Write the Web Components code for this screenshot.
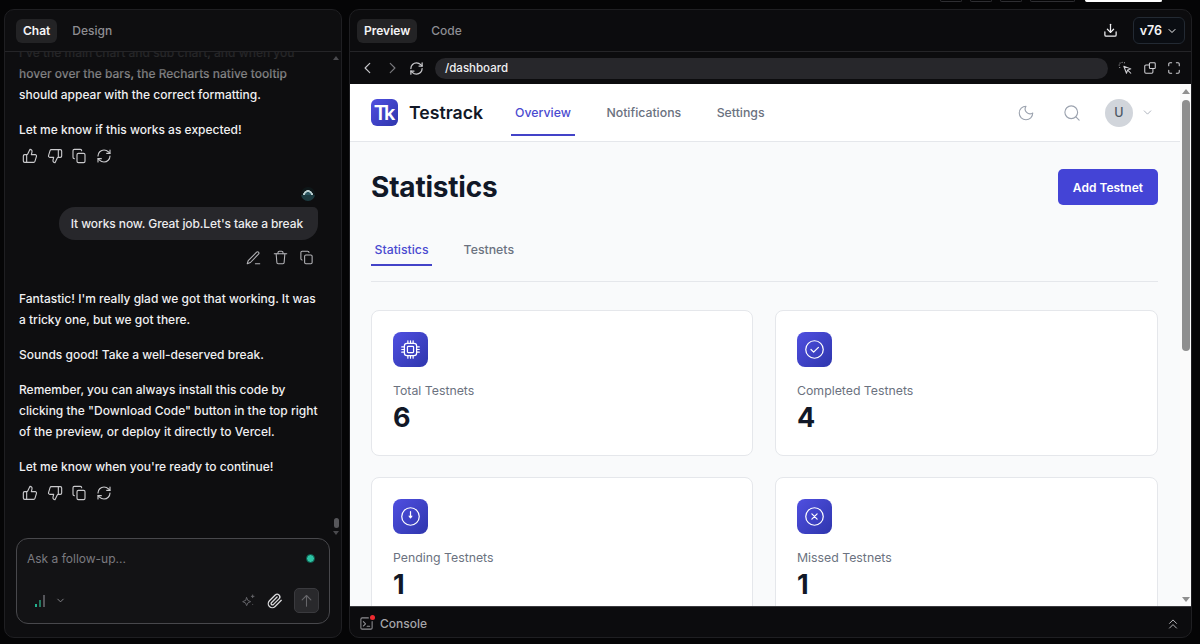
<!doctype html>
<html lang="en">
<head>
<meta charset="utf-8">
<title>Testrack</title>
<style>
  html, body { margin: 0; height: 100%; background: #050506; overflow: hidden; }
  body { font-family: Inter, "Noto Sans", sans-serif; }
</style>
</head>
<body>
<app-shell>
  <chat-panel slot="chat">
    <chat-text faded>I've the main chart and sub chart, and when you</chat-text>
    <chat-text>hover over the bars, the Recharts native tooltip<br>should appear with the correct formatting.</chat-text>
    <chat-text>Let me know if this works as expected!</chat-text>
    <reply-actions></reply-actions>
    <user-bubble>It works now. Great job.Let's take a break</user-bubble>
    <chat-text>Fantastic! I'm really glad we got that working. It was<br>a tricky one, but we got there.</chat-text>
    <chat-text>Sounds good! Take a well-deserved break.</chat-text>
    <chat-text>Remember, you can always install this code by<br>clicking the "Download Code" button in the top right<br>of the preview, or deploy it directly to Vercel.</chat-text>
    <chat-text>Let me know when you're ready to continue!</chat-text>
    <reply-actions></reply-actions>
  </chat-panel>
  <preview-panel slot="preview">
    <testrack-app>
      <stat-card label="Total Testnets" value="6" icon="cpu"></stat-card>
      <stat-card label="Completed Testnets" value="4" icon="check"></stat-card>
      <stat-card label="Pending Testnets" value="1" icon="clock"></stat-card>
      <stat-card label="Missed Testnets" value="1" icon="cross"></stat-card>
    </testrack-app>
  </preview-panel>
</app-shell>

<script>
const ICONS = {
  up: `<path d="M7 10v11"/><path d="M15 5.900 14 10h5.800a2 2 0 0 1 1.900 2.600l-2.300 7.500a2 2 0 0 1-1.900 1.400H4a2 2 0 0 1-2-2v-7.500a2 2 0 0 1 2-2h2.800a2 2 0 0 0 1.800-1.100L12 2a3.100 3.100 0 0 1 3 3.900Z"/>`,
  down: `<path d="M17 14V3"/><path d="M9 18.100 10 14H4.200a2 2 0 0 1-1.900-2.600l2.300-7.500A2 2 0 0 1 6.500 2.500H20a2 2 0 0 1 2 2V12a2 2 0 0 1-2 2h-2.800a2 2 0 0 0-1.800 1.100L12 22a3.100 3.100 0 0 1-3-3.900Z"/>`,
  copy: `<rect x="9" y="8" width="12" height="14" rx="2"/><path d="M5 16a2 2 0 0 1-2-2V4a2 2 0 0 1 2-2h9a2 2 0 0 1 2 2"/>`,
  refresh: `<path d="M3 12a9 9 0 0 1 9-9 9.750 9.750 0 0 1 6.740 2.740L21 8"/><path d="M21 3v5h-5"/><path d="M21 12a9 9 0 0 1-9 9 9.750 9.750 0 0 1-6.740-2.740L3 16"/><path d="M8 16H3v5"/>`,
  pen: `<path d="M15 22h7"/><path d="M17 3.500a2.100 2.100 0 0 1 3 3L7 20l-5 2 1.500-5Z"/>`,
  trash: `<path d="M2 6h20"/><path d="M5 6l1.200 14a2 2 0 0 0 2 2h7.600a2 2 0 0 0 2-2L19 6"/><path d="M8 6V4a2 2 0 0 1 2-2h4a2 2 0 0 1 2 2v2"/>`,
  download: `<path d="M21 14v5a2 2 0 0 1-2 2H5a2 2 0 0 1-2-2v-5"/><path d="M7 10l5 5 5-5"/><path d="M12 15V2"/>`,
  chevron: `<path d="m6 9 6 6 6-6"/>`,
  left: `<path d="m15 4-8 8 8 8"/>`,
  right: `<path d="m9 4 8 8-8 8"/>`,
  pointer: `<path d="m10 9 12 4.500-5.500 2L14.500 21Z"/><path d="m17 16 5 5"/><path d="M7 2v.01M2 7h.01M3.500 3.500v.01M11 3v.01M3 11v.01"/>`,
  windows: `<path d="M11 7H5a2 2 0 0 0-2 2v10a2 2 0 0 0 2 2h10a2 2 0 0 0 2-2v-6"/><rect x="11" y="3" width="10" height="10" rx="1.500"/>`,
  full: `<path d="M3 8V5a2 2 0 0 1 2-2h3"/><path d="M16 3h3a2 2 0 0 1 2 2v3"/><path d="M21 16v3a2 2 0 0 1-2 2h-3"/><path d="M8 21H5a2 2 0 0 1-2-2v-3"/>`,
  moon: `<path d="M12 3a6.500 6.500 0 0 0 9 9 9 9 0 1 1-9-9Z"/>`,
  search: `<circle cx="11" cy="11" r="8.500"/><path d="m21.500 21.500-4.300-4.300"/>`,
  cpu: `<rect x="5" y="5" width="14" height="14" rx="3"/><rect x="8.500" y="8.500" width="7" height="7" rx="1"/><path d="M9 2v3M12 2v3M15 2v3M9 19v3M12 19v3M15 19v3M2 9h3M2 12h3M2 15h3M19 9h3M19 12h3M19 15h3"/>`,
  check: `<circle cx="12" cy="12" r="10"/><path d="m8 12 3 3 5.500-5.500"/>`,
  clock: `<circle cx="12" cy="12" r="10"/><path d="M12 6.500v6.500"/><path d="m10.500 11.500 1.500 2 1.500-2"/>`,
  cross: `<circle cx="12" cy="12" r="10"/><path d="m9 9 6 6M15 9l-6 6"/>`,
  sparkle: `<path d="M10 7l1.800 4.200L16 13l-4.200 1.800L10 19l-1.800-4.200L4 13l4.200-1.800Z"/><path d="M19 3v4M17 5h4M19 17v.01"/>`,
  clip: `<path d="m21.400 11-9.200 9.200a6 6 0 0 1-8.500-8.500l8.600-8.600A4 4 0 1 1 18 8.800l-8.600 8.600a2 2 0 0 1-2.800-2.800l8.500-8.500"/>`,
  arrow: `<path d="M12 21V4"/><path d="m5 11 7-7 7 7"/>`,
  terminal: `<path d="M21 9v10a2 2 0 0 1-2 2H5a2 2 0 0 1-2-2V5a2 2 0 0 1 2-2h10"/><path d="m7 9 3.500 3.500L7 16"/><path d="M13 16.500h4"/>`,
  chevrons: `<path d="m18 11-6-6-6 6"/><path d="m18 19-6-6-6 6"/>`
};

function define(tag, css, html) {
  customElements.define(tag, class extends HTMLElement {
    connectedCallback() {
      if (this.shadowRoot) return;
      this.attachShadow({ mode: "open" }).innerHTML =
        `<style>${css}</style>${typeof html === "function" ? html(this) : html}`;
    }
  });
}

define("ui-icon", `
  :host { display: inline-flex; flex: none; width: var(--size, 16px); height: var(--size, 16px); color: inherit; }
  svg { width: 100%; height: 100%; fill: none; stroke: currentColor; stroke-width: var(--stroke, 2); stroke-linecap: round; stroke-linejoin: round; }
`, el => `<svg viewBox="0 0 24 24">${ICONS[el.getAttribute("name")] || ""}</svg>`);

define("tab-button", `
  :host { display: flex; align-items: center; height: 24px; padding: 0 7px; border-radius: 6px; font-size: 12px; font-weight: 500; color: #8d8d92; }
  :host([active]) { background: #232325; color: #f4f4f5; font-weight: 600; }
`, `<slot></slot>`);

define("chat-text", `
  :host { display: block; font-size: 12px; line-height: 21px; font-weight: 500; color: #f0f0f2; margin-bottom: 14px; white-space: nowrap; }
  :host([faded]) { margin-bottom: 0; }
`, `<slot></slot>`);

define("reply-actions", `
  :host { display: flex; gap: 8.500px; padding: 0 0 0 3px; color: #c9c9cc; --size: 16px; --stroke: 1.700; height: 16px; margin-top: -6px; margin-bottom: 23px; }
  :host(:last-child) { margin-bottom: 37px; }
`, `<ui-icon name="up"></ui-icon><ui-icon name="down"></ui-icon><ui-icon name="copy"></ui-icon><ui-icon name="refresh"></ui-icon>`);

define("user-bubble", `
  :host { display: flex; flex-direction: column; align-items: flex-end; margin: 0 5px 23px 0; }
  .avatar { width: 14px; height: 14px; border-radius: 50%; background: linear-gradient(transparent 58%, #1c3a40 58%), radial-gradient(circle at 50% 58%, #2a5560 0 26%, #b8ced0 30% 44%, #0e1719 48%); margin: 0 3px 6px 0; box-sizing: border-box; }
  .bubble { height: 33px; display: flex; align-items: center; padding: 0 15px 0 12px; background: #27272b; border-radius: 16px 5px 16px 16px; font-size: 12px; letter-spacing: -.1px; font-weight: 500; color: #ececee; white-space: nowrap; }
  .tools { display: flex; gap: 11.500px; color: #b4b4b8; --size: 15px; --stroke: 1.700; margin: 10px 4px 0 0; }
`, `<div class="avatar"></div><div class="bubble"><slot></slot></div>
  <div class="tools"><ui-icon name="pen"></ui-icon><ui-icon name="trash"></ui-icon><ui-icon name="copy"></ui-icon></div>`);

define("mini-scrollbar", `
  :host { display: flex; flex-direction: column; align-items: center; flex: none; width: 10px; padding: 4px 0 3px; box-sizing: border-box; }
  .up { border: 3px solid transparent; border-top: 0; border-bottom: 4px solid #4a4a4e; }
  .down { border: 3px solid transparent; border-bottom: 0; border-top: 4px solid #4a4a4e; margin-top: 3px; }
  .gap { flex: 1; }
  .thumb { width: 5px; height: 10px; border-radius: 3px; background: #56565a; }
`, `<div class="up"></div><div class="gap"></div><div class="thumb"></div><div class="down"></div>`);

define("chat-input", `
  :host { display: flex; flex-direction: column; justify-content: space-between; height: 86px; box-sizing: border-box; margin: 0 11px 13px; padding: 10px 10px 10px; border: 1px solid #48484c; border-radius: 12px; background: #131315; }
  .top, .bottom { display: flex; align-items: center; }
  .top { justify-content: space-between; font-size: 12px; color: #7b7b80; height: 18px; padding-right: 4px; }
  .dot { width: 7px; height: 7px; border-radius: 50%; background: #2dc3a4; border: 1px solid #0d5145; }
  .bottom { gap: 9px; }
  .model { display: flex; align-items: center; gap: 10px; margin-left: 8px; flex: 1; color: #8a8a8e; --size: 11px; }
  .bars { display: flex; align-items: flex-end; gap: 2px; height: 12px; }
  .bars i { width: 2px; background: #55555a; }
  .bars i:nth-child(1) { height: 3px; background: #23b28f; }
  .bars i:nth-child(2) { height: 7px; background: #23795f; }
  .bars i:nth-child(3) { height: 12px; }
  .spark { color: #636368; --size: 16px; --stroke: 1.500; }
  .clip { color: #d8d8da; --size: 16px; margin: 0 2px 0 2px; }
  .send { display: flex; align-items: center; justify-content: center; width: 25px; height: 25px; border-radius: 5px; background: #29292c; border: 1px solid #3a3a3e; box-sizing: border-box; color: #66666a; --size: 15px; --stroke: 1.700; }
`, `<div class="top"><span>Ask a follow-up...</span><span class="dot"></span></div>
  <div class="bottom">
    <div class="model"><span class="bars"><i></i><i></i><i></i></span><ui-icon name="chevron"></ui-icon></div>
    <ui-icon class="spark" name="sparkle"></ui-icon>
    <ui-icon class="clip" name="clip"></ui-icon>
    <div class="send"><ui-icon name="arrow"></ui-icon></div>
  </div>`);

define("chat-panel", `
  :host { display: flex; flex-direction: column; width: 338px; flex: none; box-sizing: border-box; background: #0e0e10; border: 1px solid #1f1f22; border-radius: 10px; overflow: hidden; }
  header { display: flex; align-items: center; height: 42px; flex: none; padding: 0 11px; border-bottom: 1px solid #252528; box-sizing: border-box; }
  tab-button + tab-button { margin-left: 8px; }
  .body { flex: 1; min-height: 0; display: flex; position: relative; }
  .messages { flex: 1; min-width: 0; overflow: hidden; display: flex; flex-direction: column; justify-content: flex-end; padding: 0 8px 0 14px; }
  .fade { position: absolute; left: 0; right: 10px; top: 0; height: 36px; background: linear-gradient(rgba(14,14,16,.9) 10%, rgba(14,14,16,.45) 70%, rgba(14,14,16,0)); }
`, `<header><tab-button active>Chat</tab-button><tab-button>Design</tab-button></header>
  <div class="body"><div class="messages"><slot></slot></div><mini-scrollbar></mini-scrollbar><div class="fade"></div></div>
  <chat-input></chat-input>`);

define("preview-panel", `
  :host { display: flex; flex-direction: column; flex: 1; min-width: 0; box-sizing: border-box; background: #0c0c0e; border: 1px solid #1f1f22; border-radius: 10px; overflow: hidden; }
  header { display: flex; align-items: center; height: 42px; flex: none; padding: 0 6px 0 7px; border-bottom: 1px solid #252528; box-sizing: border-box; }
  tab-button + tab-button { margin-left: 7px; }
  .grow { flex: 1; }
  .dl { color: #f0f0f2; --size: 15px; --stroke: 2; margin-right: 15px; }
  .version { display: flex; align-items: center; gap: 4px; height: 25px; padding: 0 6px; border: 1px solid #232a33; border-radius: 6px; background: #0a0d12; color: #f4f4f5; font-size: 12.500px; font-weight: 600; --size: 12px; }
  nav { display: flex; align-items: center; height: 32px; flex: none; padding: 0 10px 0 11px; color: #c4c4c8; --size: 14px; --stroke: 2; }
  nav .back { margin-right: 10px; }
  nav .fwd { color: #77777b; margin-right: 10px; }
  nav .reload { --size: 15px; margin-right: 11px; color: #c8c8cb; }
  .address { flex: 1; height: 21px; display: flex; align-items: center; padding: 0 10px; background: #27272b; border-radius: 11px; color: #f0f0f2; font-size: 11.500px; font-weight: 500; margin-right: 10px; }
  .tools { display: flex; gap: 10.500px; color: #d0d0d4; --stroke: 1.800; }
  main { flex: 1; min-height: 0; display: flex; background: #fff; }
  footer { display: flex; align-items: center; height: 31px; flex: none; padding: 3px 11px 0 9px; border-top: 1px solid #3a3a3e; box-sizing: border-box; color: #a5a5a9; font-size: 12px; font-weight: 500; gap: 6px; --stroke: 1.700; }
  .term { position: relative; display: inline-flex; color: #8e8e92; --size: 15px; }
  .term b { position: absolute; right: -1px; top: -1px; width: 5px; height: 5px; border-radius: 50%; background: #ee2b30; }
  .up2 { color: #b5b5b9; --size: 14px; }
`, `<header>
    <tab-button active>Preview</tab-button><tab-button>Code</tab-button>
    <span class="grow"></span>
    <ui-icon class="dl" name="download"></ui-icon>
    <div class="version">v76<ui-icon name="chevron"></ui-icon></div>
  </header>
  <nav>
    <ui-icon class="back" name="left"></ui-icon>
    <ui-icon class="fwd" name="right"></ui-icon>
    <ui-icon class="reload" name="refresh"></ui-icon>
    <div class="address">/dashboard</div>
    <div class="tools"><ui-icon name="pointer"></ui-icon><ui-icon name="windows"></ui-icon><ui-icon name="full"></ui-icon></div>
  </nav>
  <main><slot></slot></main>
  <footer><span class="term"><ui-icon name="terminal"></ui-icon><b></b></span>Console<span class="grow"></span><ui-icon class="up2" name="chevrons"></ui-icon></footer>`);

define("app-scrollbar", `
  :host { display: flex; flex-direction: column; align-items: center; flex: none; width: 11px; padding: 5px 0 4px; box-sizing: border-box; background: #fafafa; }
  .up { border: 4px solid transparent; border-top: 0; border-bottom: 5px solid #8f8f8f; }
  .down { border: 4px solid transparent; border-bottom: 0; border-top: 5px solid #8f8f8f; }
  .thumb { width: 8px; height: 251px; margin-top: 6px; border-radius: 4px; background: #8f8f8f; }
  .gap { flex: 1; }
`, `<div class="up"></div><div class="thumb"></div><div class="gap"></div><div class="down"></div>`);

define("stat-card", `
  :host { display: block; box-sizing: border-box; height: 146px; padding: 21px 21px 0; background: #fff; border: 1px solid #e5e7eb; border-radius: 8px; }
  .badge { display: flex; align-items: center; justify-content: center; width: 35px; height: 35px; border-radius: 8px; background: linear-gradient(135deg, #4f4fe0, #2f36ad); color: #fff; --size: 21px; --stroke: 1.400; }
  .label { margin-top: 16px; font-size: 12.300px; line-height: 16px; color: #6b7280; }
  .value { margin-top: 3px; font-size: 27px; line-height: 32px; font-weight: 700; color: #111827; }
`, el => `<div class="badge"><ui-icon name="${el.getAttribute("icon")}"></ui-icon></div>
  <div class="label">${el.getAttribute("label")}</div>
  <div class="value">${el.getAttribute("value")}</div>`);

define("testrack-app", `
  :host { display: flex; flex: 1; min-width: 0; color: #111827; }
  .scroll { flex: 1; min-width: 0; display: flex; flex-direction: column; overflow: hidden; background: #f9fafb; }
  header { display: flex; align-items: stretch; height: 58px; flex: none; box-sizing: border-box; padding: 0 26px 0 21px; background: #fff; border-bottom: 1px solid #e5e7eb; }
  .brand { display: flex; align-items: center; gap: 11px; font-size: 17.700px; font-weight: 600; margin-right: 28px; }
  .logo { display: flex; align-items: center; justify-content: center; width: 27px; height: 27px; border-radius: 6px; background: linear-gradient(135deg, #4f4fe0, #2f36ad); color: #fff; font-size: 20px; font-weight: 600; letter-spacing: -3px; padding-right: 3px; box-sizing: border-box; }
  .links { display: flex; align-items: flex-start; gap: 27.500px; flex: 1; }
  .links a { display: flex; align-items: center; height: 52px; padding: 6px 4px 0; font-size: 12.300px; font-weight: 500; color: #6b7280; border-bottom: 2px solid transparent; box-sizing: border-box; }
  .links a.on { color: #4a4ad0; border-bottom-color: #4343c8; }
  .end { display: flex; align-items: center; color: #9ca3af; --stroke: 1.500; }
  .moon { --size: 18px; margin-right: 28px; }
  .find { --size: 18px; margin-right: 24px; }
  .user { display: flex; align-items: center; justify-content: center; width: 28px; height: 28px; border-radius: 50%; background: #d1d5db; color: #4b5563; font-size: 12.500px; font-weight: 500; margin-right: 8px; }
  .caret { --size: 13px; }
  section { flex: 1; min-height: 0; padding: 27px 22px 0 21px; }
  .title { display: flex; align-items: center; justify-content: space-between; height: 36px; }
  h1 { margin: 0; font-size: 28px; font-weight: 700; letter-spacing: -.2px; color: #111827; }
  .add { display: flex; align-items: center; height: 36px; padding: 0 15px; border-radius: 5px; background: #4444d6; color: #fff; font-size: 12px; font-weight: 600; }
  .tabs { display: flex; gap: 28px; margin-top: 21px; height: 56px; box-sizing: border-box; border-bottom: 1px solid #e5e7eb; }
  .tabs a { display: flex; align-items: center; height: 40px; padding: 8px 3.500px 0; font-size: 12.300px; font-weight: 500; color: #6b7280; box-sizing: border-box; border-bottom: 2px solid transparent; }
  .tabs a.on { color: #4a4ad0; border-bottom-color: #4343c8; }
  .grid { display: grid; grid-template-columns: 382px 1fr; gap: 21px 22px; margin-top: 28px; }
`, `<div class="scroll">
    <header>
      <div class="brand"><span class="logo">Tk</span>Testrack</div>
      <div class="links"><a class="on">Overview</a><a>Notifications</a><a>Settings</a></div>
      <div class="end">
        <ui-icon class="moon" name="moon"></ui-icon>
        <ui-icon class="find" name="search"></ui-icon>
        <span class="user">U</span>
        <ui-icon class="caret" name="chevron"></ui-icon>
      </div>
    </header>
    <section>
      <div class="title"><h1>Statistics</h1><div class="add">Add Testnet</div></div>
      <div class="tabs"><a class="on">Statistics</a><a>Testnets</a></div>
      <div class="grid"><slot></slot></div>
    </section>
  </div>
  <app-scrollbar></app-scrollbar>`);

define("app-shell", `
  :host { display: flex; flex-direction: column; height: 644px; box-sizing: border-box; padding: 0 8px 6px 4px; background: #050506; }
  .sliver { display: flex; justify-content: flex-end; align-items: flex-end; gap: 8px; height: 9px; flex: none; padding-right: 30px; box-sizing: border-box; }
  .sliver i { display: block; height: 2px; width: 22px; border: 1px solid #2e2e32; border-top: 0; border-radius: 0 0 5px 5px; margin-bottom: 7px; box-sizing: border-box; }
  .sliver i.wide { width: 45px; margin-right: 2px; }
  .sliver i.white { width: 77px; background: #fff; border-color: #fff; }
  .panels { flex: 1; min-height: 0; display: flex; gap: 7px; }
  ::slotted(*) { min-height: 0; }
`, `<div class="sliver"><i></i><i></i><i></i><i class="wide"></i><i class="white"></i></div>
  <div class="panels"><slot name="chat"></slot><slot name="preview"></slot></div>`);
</script>
</body>
</html>
